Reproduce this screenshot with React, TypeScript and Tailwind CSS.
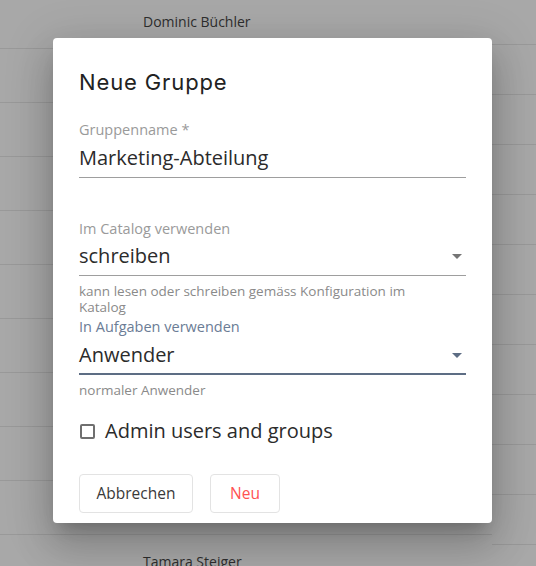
import { useState } from 'react'

const leftRows = ['Dominic Büchler', '', '', '', '', '', '', '', '', '', 'Tamara Steiger']
const rightRows = Array(12).fill(0)

function Caret({ color }: { color: string }) {
  return (
    <svg width="10" height="5" viewBox="0 0 10 5" className="shrink-0">
      <path d="M0 0 L10 0 L5 5 Z" fill={color} />
    </svg>
  )
}

export default function App() {
  const [admin, setAdmin] = useState(false)

  return (
    <div
      className="relative w-[536px] h-[566px] overflow-hidden bg-[#a8a8a8]"
      style={{ fontFamily: '"Open Sans", "Liberation Sans", sans-serif' }}
    >
      {/* page behind the overlay */}
      <div className="flex h-full">
        <div className="flex-1 -mt-[5px]">
          {leftRows.map((name, i) => (
            <div key={i} className="h-[54px] border-b border-[#999999] flex items-center pl-[143px] text-[14px] text-[#2e2e2e]">
              {name}
            </div>
          ))}
        </div>
        <div className="w-[44px] -mt-[5px]">
          {rightRows.map((_, i) => (
            <div key={i} className="h-[50px] border-b border-[#999999]" />
          ))}
        </div>
      </div>

      {/* dialog */}
      <div className="absolute left-[53px] top-[38px] w-[439px] h-[485px] bg-white rounded-[4px] shadow-[0_11px_15px_-7px_rgba(0,0,0,0.2),0_24px_38px_3px_rgba(0,0,0,0.14),0_9px_46px_8px_rgba(0,0,0,0.12)] px-[26px] pt-[30px]">
        <h2
          className="text-[22px] leading-7 text-[#222] tracking-[0.04em]"
          style={{ fontFamily: 'Inter, "DejaVu Sans", sans-serif' }}
        >
          Neue Gruppe
        </h2>

        <div className="mt-[24px]">
          <div className="text-[14.5px] leading-5 text-[#9a9a9a]">Gruppenname *</div>
          <div className="pt-[5px] pb-[6px] border-b border-[#9e9e9e] text-[20px] leading-[26px] text-[#2b2b2b]">
            Marketing-Abteilung
          </div>
        </div>

        <div className="mt-[41px]">
          <div className="text-[14.5px] leading-5 text-[#9a9a9a]">Im Catalog verwenden</div>
          <div className="pt-[4px] pb-[6px] pr-[4px] border-b border-[#9e9e9e] flex items-center justify-between text-[20px] leading-[26px] text-[#2b2b2b]">
            <span>schreiben</span>
            <Caret color="#757575" />
          </div>
          <div className="mt-[7px] w-[345px] text-[13.5px] leading-4 text-[#8a8a8a]">
            kann lesen oder schreiben gemäss Konfiguration im Katalog
          </div>
        </div>

        <div className="mt-[2px]">
          <div className="text-[14.5px] leading-5 text-[#6b7c95]">In Aufgaben verwenden</div>
          <div className="pt-[5px] pb-[5px] pr-[4px] border-b-2 border-[#5d6d84] flex items-center justify-between text-[20px] leading-[26px] text-[#2b2b2b]">
            <span>Anwender</span>
            <Caret color="#5d6d84" />
          </div>
          <div className="mt-[7px] text-[13.5px] leading-4 text-[#8a8a8a]">normaler Anwender</div>
        </div>

        <label className="mt-[20px] h-[26px] flex items-center gap-[10px] cursor-pointer">
          <span
            className={`w-[15px] h-[15px] border-2 border-[#6f6f6f] rounded-[2px] ml-[1px] ${admin ? 'bg-[#6f6f6f]' : ''}`}
            onClick={() => setAdmin(!admin)}
          />
          <span className="text-[20px] leading-[26px] text-[#2b2b2b]">Admin users and groups</span>
        </label>

        <div className="mt-[30px] flex gap-[17px]">
          <button className="w-[114px] h-[39px] border border-[#e3e3e3] rounded-[4px] text-[15.5px] text-[#3a3a3a] bg-white">
            Abbrechen
          </button>
          <button className="w-[70px] h-[39px] border border-[#e3e3e3] rounded-[4px] text-[15.5px] text-[#ff5252] bg-white">
            Neu
          </button>
        </div>
      </div>
    </div>
  )
}
